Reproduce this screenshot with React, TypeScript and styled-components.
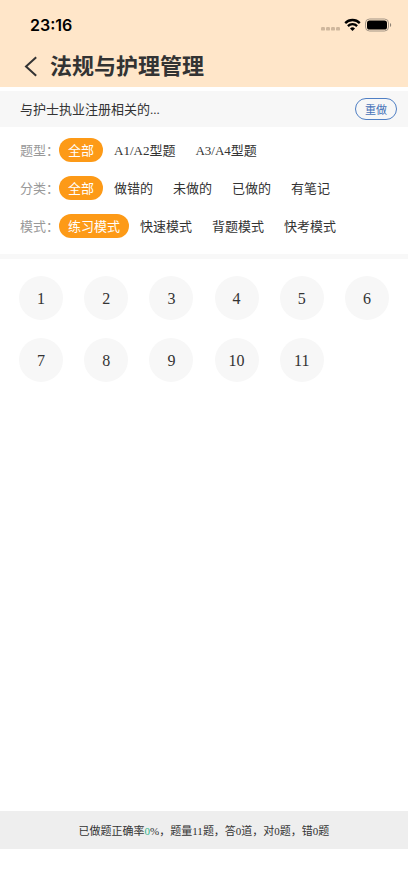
import React, { useState } from "react";
import styled, { createGlobalStyle } from "styled-components";

const GlobalStyle = createGlobalStyle`
  *, *::before, *::after { box-sizing: border-box; }
  body {
    margin: 0;
    background: #fff;
    color: #333;
    font-family: "Liberation Serif", "Noto Sans CJK SC", serif;
  }
  button { font-family: inherit; cursor: pointer; }
`;

const Page = styled.div`
  display: flex;
  flex-direction: column;
  min-height: 100vh;
`;

const Header = styled.header`
  background: #ffe6c9;
  padding-bottom: 4px;
`;

const StatusBar = styled.div`
  display: flex;
  align-items: center;
  justify-content: space-between;
  height: 49px;
  padding: 0 16px 0 30px;
`;

const Clock = styled.time`
  color: #000;
  font: 600 16px/20px Inter, sans-serif;
`;

const Indicators = styled.div`
  display: flex;
  align-items: center;
  gap: 4px;
`;

const TitleBar = styled.div`
  display: flex;
  align-items: center;
  height: 34px;
  padding: 0 19px;
`;

const BackButton = styled.button`
  display: flex;
  align-items: center;
  justify-content: center;
  width: 24px;
  height: 32px;
  margin-right: 7px;
  padding: 0;
  border: 0;
  background: none;
  color: #333;
`;

const Title = styled.h1`
  margin: 0;
  padding-bottom: 4px;
  color: #333;
  font: 700 22px/28px "Noto Sans CJK SC", sans-serif;
`;

const ChapterBar = styled.section`
  display: flex;
  align-items: center;
  justify-content: space-between;
  height: 36px;
  margin-top: 4px;
  padding: 0 11px 0 20px;
  background: #f7f7f7;
`;

const ChapterName = styled.h2`
  margin: 0;
  padding-top: 2px;
  font-size: 13px;
  font-weight: 400;
  line-height: 20px;
`;

const RedoButton = styled.button`
  height: 22px;
  padding: 2px 9px 0;
  border: 1px solid #4f7fc4;
  border-radius: 11px;
  background: transparent;
  color: #4672b8;
  font-size: 11px;
  line-height: 18px;
`;

const Filters = styled.section`
  display: flex;
  flex-direction: column;
  gap: 14px;
  padding: 11px 20px 16px;
  border-bottom: 5px solid #f8f8f8;
`;

const FilterRow = styled.div`
  display: flex;
  align-items: center;
`;

const FilterLabel = styled.span`
  flex: none;
  padding-top: 2px;
  color: #999;
  font-size: 13px;
  line-height: 22px;
`;

const Options = styled.div`
  display: flex;
  flex-wrap: wrap;
  gap: 2px;
`;

const Option = styled.button<{ $active: boolean }>`
  height: 24px;
  padding: 2px 9px 0;
  border: 0;
  border-radius: 12px;
  background: ${(p) => (p.$active ? "#fd9a17" : "transparent")};
  color: ${(p) => (p.$active ? "#fff" : "#333")};
  font-size: 13px;
  line-height: 22px;
  white-space: nowrap;
`;

const Questions = styled.main`
  flex: 1;
  padding: 17px 19px;
`;

const QuestionGrid = styled.div`
  display: grid;
  grid-template-columns: repeat(6, 44px);
  justify-content: space-between;
  row-gap: 18px;
`;

const QuestionButton = styled.button`
  width: 44px;
  height: 44px;
  padding: 2px 0 0;
  border: 0;
  border-radius: 50%;
  background: #f7f7f7;
  color: #333;
  font-size: 16px;
`;

const Summary = styled.footer`
  margin-bottom: 34px;
  padding: 10px 0 8px;
  background: #eee;
  font-size: 11px;
  line-height: 20px;
  text-align: center;
`;

const Rate = styled.span`
  color: #2fb58a;
`;

const SignalIcon = () => (
  <svg width="19" height="14" viewBox="0 0 19 14" fill="#cfb79d" aria-hidden="true">
    {[0, 5, 10, 15].map((x) => (
      <rect key={x} x={x} y="9" width="4" height="3.6" rx="1.2" />
    ))}
  </svg>
);

const WifiIcon = () => (
  <svg width="17" height="14" viewBox="0 0 17 14" fill="none" stroke="#000" strokeWidth="2.3" aria-hidden="true">
    <path d="M1.2 5.1a10.2 10.2 0 0 1 14.6 0" />
    <path d="M3.9 8.1a6.5 6.5 0 0 1 9.2 0" />
    <path d="M8.5 12.9 6 10.4a3.6 3.6 0 0 1 5 0z" fill="#000" stroke="none" />
  </svg>
);

const BatteryIcon = () => (
  <svg width="27" height="14" viewBox="0 0 27 14" aria-hidden="true">
    <rect x="0.5" y="1" width="23" height="12" rx="4" fill="none" stroke="#a39585" />
    <rect x="2" y="2.5" width="20" height="9" rx="2.6" fill="#000" />
    <path d="M25 5v4c1.6-.7 1.6-3.3 0-4z" fill="#8d8072" />
  </svg>
);

const BackIcon = () => (
  <svg width="14" height="22" viewBox="0 0 14 22" fill="none" stroke="currentColor" strokeWidth="2" aria-hidden="true">
    <path d="M12.2 2.2 2 11.5l10.2 9.3" />
  </svg>
);

const FILTERS = [
  { label: "题型", options: ["全部", "A1/A2型题", "A3/A4型题"] },
  { label: "分类", options: ["全部", "做错的", "未做的", "已做的", "有笔记"] },
  { label: "模式", options: ["练习模式", "快速模式", "背题模式", "快考模式"] },
];

const QUESTION_COUNT = 11;

export default function App() {
  const [selected, setSelected] = useState<number[]>(FILTERS.map(() => 0));
  const choose = (row: number, option: number) =>
    setSelected((prev) => prev.map((value, i) => (i === row ? option : value)));

  return (
    <Page lang="zh-CN">
      <GlobalStyle />
      <Header>
        <StatusBar>
          <Clock>23:16</Clock>
          <Indicators>
            <SignalIcon />
            <WifiIcon />
            <BatteryIcon />
          </Indicators>
        </StatusBar>
        <TitleBar>
          <BackButton type="button" aria-label="返回">
            <BackIcon />
          </BackButton>
          <Title>法规与护理管理</Title>
        </TitleBar>
      </Header>
      <ChapterBar>
        <ChapterName>与护士执业注册相关的...</ChapterName>
        <RedoButton type="button">重做</RedoButton>
      </ChapterBar>
      <Filters>
        {FILTERS.map((filter, row) => (
          <FilterRow key={filter.label} role="group" aria-labelledby={`filter-${row}`}>
            <FilterLabel id={`filter-${row}`}>{filter.label}：</FilterLabel>
            <Options>
              {filter.options.map((option, i) => (
                <Option
                  key={option}
                  type="button"
                  $active={selected[row] === i}
                  aria-pressed={selected[row] === i}
                  onClick={() => choose(row, i)}
                >
                  {option}
                </Option>
              ))}
            </Options>
          </FilterRow>
        ))}
      </Filters>
      <Questions>
        <QuestionGrid>
          {Array.from({ length: QUESTION_COUNT }, (_, i) => (
            <QuestionButton key={i} type="button">
              {i + 1}
            </QuestionButton>
          ))}
        </QuestionGrid>
      </Questions>
      <Summary>
        已做题正确率<Rate>0</Rate>%，题量{QUESTION_COUNT}题，答0道，对0题，错0题
      </Summary>
    </Page>
  );
}
